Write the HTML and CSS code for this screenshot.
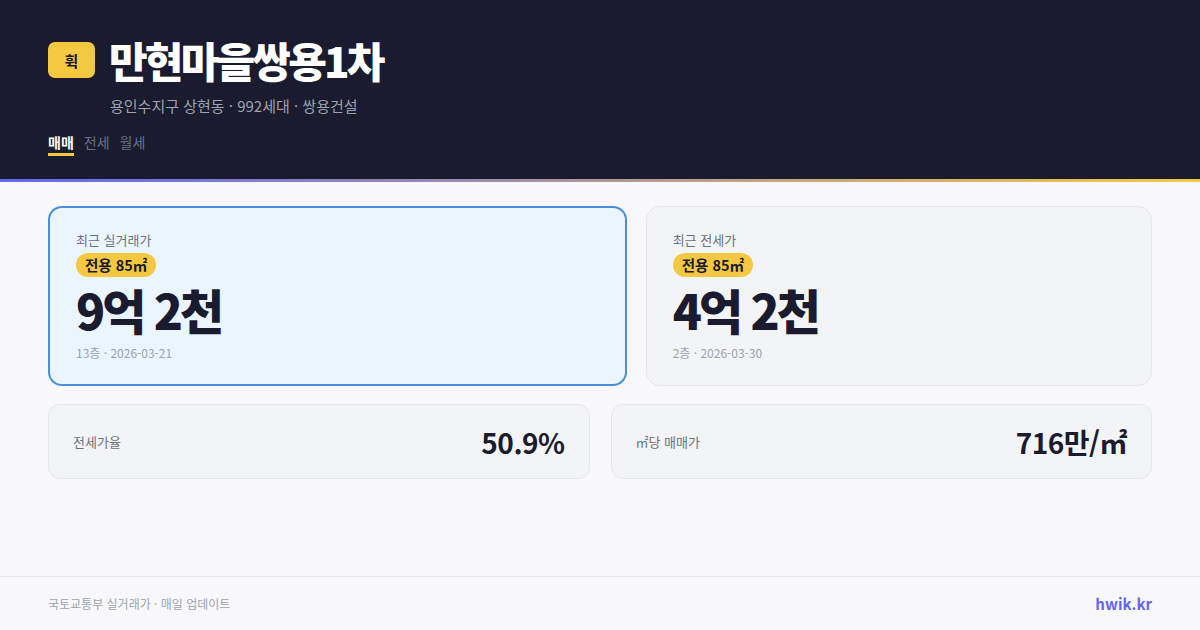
FILE: index.html
```html
<!DOCTYPE html>
<html lang="ko">
<head>
<meta charset="utf-8">
<link rel="stylesheet" href="styles.css">
</head>
<body>
<div class="page">
  <header class="header">
    <div class="title-row">
      <div class="logo">휙</div>
      <h1 class="title">만현마을쌍용1차</h1>
    </div>
    <div class="subtitle">용인수지구 상현동 · 992세대 · 쌍용건설</div>
    <nav class="tabs">
      <span class="tab active">매매</span>
      <span class="tab">전세</span>
      <span class="tab">월세</span>
    </nav>
  </header>
  <div class="accent"></div>
  <main class="main">
    <div class="row-top">
      <section class="card card-primary">
        <div class="label">최근 실거래가</div>
        <div class="badge">전용 85㎡</div>
        <div class="price">9억 2천</div>
        <div class="meta">13층 · 2026-03-21</div>
      </section>
      <section class="card">
        <div class="label">최근 전세가</div>
        <div class="badge">전용 85㎡</div>
        <div class="price">4억 2천</div>
        <div class="meta">2층 · 2026-03-30</div>
      </section>
    </div>
    <div class="row-bottom">
      <section class="stat">
        <span class="stat-label">전세가율</span>
        <span class="stat-value">50.9%</span>
      </section>
      <section class="stat">
        <span class="stat-label">㎡당 매매가</span>
        <span class="stat-value">716만/㎡</span>
      </section>
    </div>
  </main>
  <footer class="footer">
    <span class="source">국토교통부 실거래가 · 매일 업데이트</span>
    <span class="brand">hwik.kr</span>
  </footer>
</div>
</body>
</html>
```

FILE: styles.css
```css
* { box-sizing: border-box; margin: 0; padding: 0; }
html, body { width: 1200px; height: 630px; overflow: hidden; }
body {
  font-family: "Noto Sans CJK KR", "Noto Sans", sans-serif;
  background: #f8f8fa;
  color: #1a1b2e;
}
.page { display: flex; flex-direction: column; height: 630px; }
.header {
  background: #1a1b2e;
  height: 179px;
  padding: 36px 48px 0 48px;
}
.title-row { display: flex; align-items: center; gap: 14px; }
.logo {
  width: 47px; height: 36px;
  background: #f5c842;
  border-radius: 7px;
  display: flex; align-items: center; justify-content: center;
  font-size: 15px; font-weight: 700; color: #1a1b2e;
}
.title {
  font-size: 42px; font-weight: 800; color: #ffffff;
  letter-spacing: -2.8px; line-height: 48px;
}
.subtitle {
  margin: 12px 0 0 62px;
  font-size: 15px; color: #9ca3af; line-height: 20px;
}
.tabs { display: flex; gap: 10px; margin-top: 16px; }
.tab {
  font-size: 14px; color: #6b7280; line-height: 20px;
  padding-bottom: 1px;
}
.tab.active {
  color: #ffffff; font-weight: 700;
  border-bottom: 3px solid #f5c842;
}
.accent {
  height: 3px;
  background: linear-gradient(90deg, #6366f1, #f5c842);
}
.main {
  flex: 1;
  padding: 24px 48px 0 48px;
  display: flex; flex-direction: column; gap: 18px;
}
.row-top {
  display: grid;
  grid-template-columns: 8fr 7fr;
  gap: 19px;
}
.card {
  height: 180px;
  background: #f3f4f6;
  border: 1px solid #e5e7eb;
  border-radius: 14px;
  padding: 24px 26px;
  display: flex; flex-direction: column; align-items: flex-start;
}
.card-primary {
  background: #ebf5ff;
  border: 2px solid #4a90d9;
  padding: 23px 26px;
}
.label { font-size: 13px; color: #6b7280; line-height: 18px; }
.badge {
  margin-top: 4px;
  background: #f5c842;
  color: #1a1b2e;
  font-size: 14.5px; font-weight: 700;
  line-height: 24px;
  padding: 0 9px;
  border-radius: 12px;
}
.price {
  margin-top: 6px;
  font-size: 48px; font-weight: 800; color: #1a1b2e;
  letter-spacing: -3px; line-height: 52px;
}
.meta { font-size: 12px; color: #9ca3af; line-height: 16px; margin-top: 10px; }
.row-bottom {
  display: grid;
  grid-template-columns: 1fr 1fr;
  gap: 21px;
}
.stat {
  height: 75px;
  background: #f3f4f6;
  border: 1px solid #e5e7eb;
  border-radius: 12px;
  padding: 0 24px;
  display: flex; align-items: center; justify-content: space-between;
}
.stat-label { font-size: 13px; color: #6b7280; }
.stat-value { font-size: 28px; font-weight: 700; color: #1a1b2e; letter-spacing: -0.5px; }
.footer {
  height: 54px;
  border-top: 1px solid #e5e7eb;
  padding: 0 48px;
  display: flex; align-items: center; justify-content: space-between;
}
.source { font-size: 12px; color: #9ca3af; }
.brand { font-size: 15px; font-weight: 700; color: #6366f1; }
```
